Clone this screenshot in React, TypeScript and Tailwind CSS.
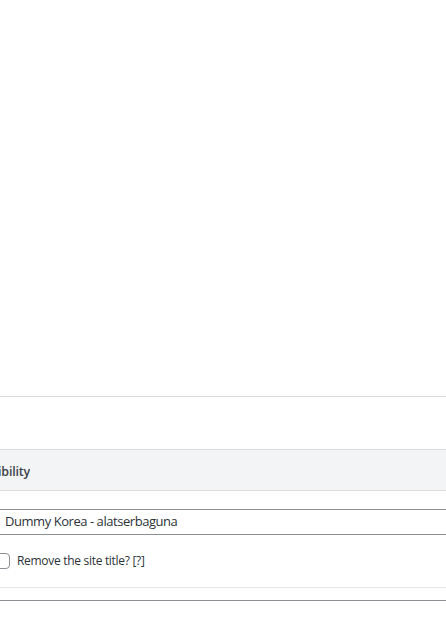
export default function App() {
  return (
    <div className="min-h-[623px] w-[446px] overflow-hidden bg-white font-['Open_Sans',sans-serif] text-[#2c3338]">
      {/* empty top area */}
      <div className="h-[397px] border-b border-[#dcdcde]" />
      <div className="h-[52px]" />

      {/* section header, label clipped at left edge */}
      <div className="flex h-[42px] items-center border-y border-[#dcdcde] bg-[#f3f4f5] pt-[5px]">
        <div className="flex w-[30px] justify-end overflow-hidden">
          <span className="whitespace-nowrap text-[12.5px] font-semibold tracking-[-0.2px] text-[#3c434a]">Visibility</span>
        </div>
      </div>

      <div className="pt-[18px]">
        <div className="-ml-[4px] flex h-[26px] w-[470px] items-center border border-[#8c8f94] pl-[8px] text-[13px] tracking-[-0.45px] text-[#2c3338]">
          Dummy Korea - alatserbaguna
        </div>

        <label className="mt-[17px] flex items-center gap-[7px]">
          <span className="-ml-[6px] h-[16px] w-[16px] rounded-[4px] border border-[#8c8f94] bg-white" />
          <span className="text-[12px] tracking-[-0.3px] text-[#2c3338]">Remove the site title? [?]</span>
        </label>

        <div className="mt-[17px] border-b border-[#e5e5e5]" />
        <div className="mt-[12px] border-b border-[#8c8f94]" />
      </div>
    </div>
  )
}
